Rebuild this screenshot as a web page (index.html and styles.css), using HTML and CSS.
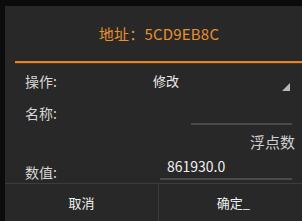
FILE: index.html
```html
<!DOCTYPE html>
<html lang="zh">
<head>
    <meta charset="UTF-8">
    <title>地址</title>
    <link rel="stylesheet" href="styles.css">
</head>
<body>
    <div class="dialog">
        <div class="title">地址：5CD9EB8C</div>
        <div class="title-line"></div>

        <div class="form">
            <div class="row row-op">
                <span class="label">操作:</span>
                <div class="spinner">
                    <span class="spinner-text">修改</span>
                    <span class="spinner-arrow"></span>
                </div>
            </div>

            <div class="row row-name">
                <span class="label">名称:</span>
                <div class="edit edit-name"></div>
            </div>

            <div class="row-type">浮点数</div>

            <div class="row row-value">
                <span class="label">数值:</span>
                <div class="edit edit-value">861930.0</div>
            </div>
        </div>

        <div class="buttons">
            <div class="btn">取消</div>
            <div class="btn btn-ok">确定_</div>
        </div>
    </div>
</body>
</html>
```

FILE: styles.css
```css
body {
    margin: 0;
    background-color: #0b0b0b;
    font-family: "Noto Sans CJK SC", "Noto Sans", sans-serif;
    color: #d6d6d6;
    overflow: hidden;
}

.dialog {
    margin: 6px 0 0 5px;
    height: 215px;
    background-color: #282828;
    display: flex;
    flex-direction: column;
}

.title {
    height: 55px;
    display: flex;
    align-items: center;
    justify-content: center;
    padding-left: 11px;
    color: #e8902c;
    font-size: 15px;
    letter-spacing: 0.2px;
}

.title-line {
    height: 2px;
    margin-left: 10px;
    background-color: #e3852c;
    box-shadow: 0 1px 0 #5a3510;
}

.form {
    padding: 0 7px 0 20px;
    height: 120px;
    display: flex;
    flex-direction: column;
}

.row {
    display: flex;
    align-items: center;
}

.label {
    font-size: 14px;
    width: 128px;
    flex-shrink: 0;
}

.row-op {
    height: 35px;
}

.spinner {
    flex: 1;
    display: flex;
    align-items: flex-start;
    justify-content: space-between;
    height: 100%;
    padding-top: 7px;
    padding-right: 3px;
    box-sizing: border-box;
}

.spinner-text {
    font-size: 13px;
    color: #ececec;
    margin-top: 1px;
}

.spinner-arrow {
    width: 0;
    height: 0;
    margin: 13px 2px 0 0;
    border-left: 8px solid transparent;
    border-bottom: 8px solid #b8b8b8;
}

.row-name {
    height: 30px;
}

.edit {
    border-bottom: 2px solid #4a4a4a;
    box-sizing: border-box;
}

.edit-name {
    margin: 0 3px 3px 38px;
    flex: 1;
    height: 22px;
    align-self: flex-end;
}

.row-type {
    height: 28px;
    line-height: 28px;
    text-align: right;
    font-size: 15px;
    color: #cfcfcf;
}

.row-value {
    height: 27px;
    align-items: flex-end;
}

.row-value .label {
    width: 135px;
    align-self: center;
    margin-top: 4px;
}

.edit-value {
    flex: 1;
    font-size: 14px;
    color: #f0f0f0;
    padding: 0 0 2px 7px;
    line-height: 20px;
    margin: 0 3px 3px 0;
}

.buttons {
    flex: 1;
    display: flex;
    border-top: 1px solid #3c3c3c;
}

.btn {
    flex: 0 0 153px;
    display: flex;
    align-items: center;
    justify-content: center;
    font-size: 13px;
    color: #f0f0f0;
    border-right: 1px solid #3c3c3c;
}

.btn-ok {
    flex: 1;
    border-right: none;
    padding-left: 6px;
}
```
